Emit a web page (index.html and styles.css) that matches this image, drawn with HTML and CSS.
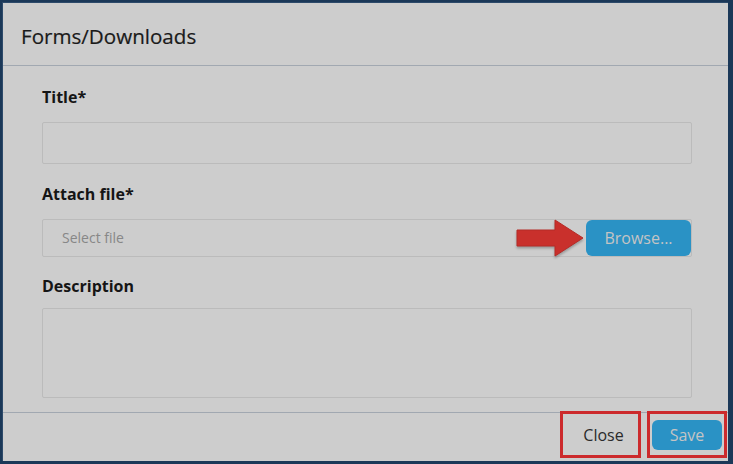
FILE: index.html
```html
<!DOCTYPE html>
<html>
<head>
<meta charset="utf-8">
<link rel="stylesheet" href="styles.css">
</head>
<body>
<div class="modal">
  <div class="modal-header">
    <h1 class="modal-title">Forms/Downloads</h1>
  </div>
  <div class="modal-body">
    <div class="group group-title">
      <label class="label">Title*</label>
      <div class="input"></div>
    </div>
    <div class="group group-file">
      <label class="label">Attach file*</label>
      <div class="file-input">
        <span class="placeholder">Select file</span>
        <div class="browse-wrap">
          <svg class="arrow" width="72" height="42" viewBox="0 0 72 42">
            <path d="M2 13 H40 V3 L68 21 L40 39 V29 H2 Z" fill="#c9302c" stroke="#b52a26" stroke-width="1" stroke-linejoin="round"/>
          </svg>
          <span class="btn-blue btn-browse">Browse...</span>
        </div>
      </div>
    </div>
    <div class="group">
      <label class="label label-desc">Description</label>
      <div class="textarea"></div>
    </div>
  </div>
  <div class="modal-footer">
    <div class="hl hl-close"><span class="btn-close">Close</span></div>
    <div class="hl hl-save"><span class="btn-blue btn-save">Save</span></div>
  </div>
</div>
</body>
</html>
```
FILE: styles.css
```css
html, body {
  margin: 0;
  padding: 0;
}
body {
  background: #1b3858;
  width: 733px;
  height: 464px;
  overflow: hidden;
  font-family: "Open Sans", "Noto Sans", sans-serif;
  padding: 2px 0 0 2px;
  box-sizing: border-box;
}
.modal {
  width: 726px;
  height: 459px;
  background: #cdcdcd;
  border-left: 1px solid #2d4a6a;
  border-top: 1px solid #2d4a6a;
  box-sizing: border-box;
  display: flex;
  flex-direction: column;
}
.modal-header {
  height: 64px;
  border-bottom: 1px solid #a1a8b1;
  display: flex;
  align-items: center;
  padding-left: 18px;
  box-sizing: border-box;
}
.modal-title {
  margin: 0;
  font-size: 20.6px;
  font-weight: 400;
  color: #1a1a1a;
  line-height: 26px;
  padding-top: 4px;
  -webkit-text-stroke: 0.2px #1a1a1a;
}
.modal-body {
  padding: 20px 36px 14px 39px;
}
.group {
  margin-bottom: 21px;
}
.group-title {
  margin-bottom: 19px;
}
.group-file {
  margin-bottom: 18px;
}
.label {
  display: block;
  font-size: 16px;
  font-weight: 700;
  line-height: 22px;
  color: #151515;
  margin-bottom: 14px;
}
.label-desc {
  margin-bottom: 11px;
}
.group:last-child {
  margin-bottom: 0;
}
.input, .file-input, .textarea {
  border: 1px solid #bbbbbb;
  border-radius: 2px;
  box-sizing: border-box;
  background: #cdcdcd;
}
.input {
  height: 42px;
}
.file-input {
  height: 38px;
  display: flex;
  align-items: center;
  justify-content: space-between;
  padding: 0 0 0 19px;
}
.placeholder {
  font-size: 14px;
  color: #878787;
}
.browse-wrap {
  position: relative;
  display: flex;
}
.arrow {
  position: absolute;
  left: -71px;
  top: -3px;
  filter: drop-shadow(0 2px 1px rgba(0,0,0,0.25));
}
.btn-blue {
  background: #2a92c5;
  color: #c4c4c4;
  border-radius: 6px;
  display: flex;
  align-items: center;
  justify-content: center;
  font-size: 16px;
}
.btn-browse {
  width: 105px;
  height: 36px;
  box-sizing: border-box;
}
.textarea {
  height: 90px;
}
.modal-footer {
  margin-top: auto;
  border-top: 1px solid #a1a8b1;
  height: 50px;
  box-sizing: border-box;
  display: flex;
  justify-content: flex-end;
  align-items: flex-start;
  padding-right: 1px;
  gap: 6px;
}
.hl {
  border: 3px solid #cc2a2c;
  box-sizing: border-box;
  height: 47px;
  margin-top: -2px;
  display: flex;
  align-items: center;
  justify-content: center;
}
.hl-close {
  width: 81px;
}
.hl-save {
  width: 80px;
}
.btn-close {
  font-size: 16px;
  color: #2a2a2a;
  padding: 1px 0 0 6px;
}
.btn-save {
  width: 70px;
  height: 30px;
  font-size: 16px;
  margin-top: 2px;
}
```
